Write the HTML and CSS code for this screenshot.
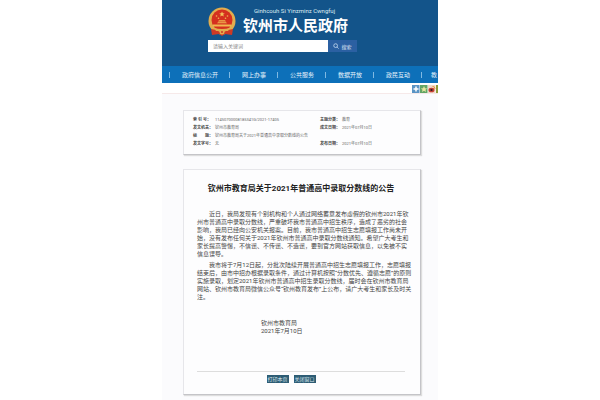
FILE: index.html
```html
<!DOCTYPE html>
<html lang="zh-CN">
<head>
  <meta charset="UTF-8" />
  <meta name="viewport" content="width=device-width, initial-scale=1" />
  <title>钦州市人民政府</title>
  <link rel="stylesheet" href="styles.css">
</head>
<body>
  <div class="page">
    <header class="header">
      <div class="brand">
        <svg class="emblem" viewBox="0 0 28 30">
          <ellipse cx="14" cy="14" rx="13.5" ry="13.5" fill="#e2ad4e" />
          <path d="M3 22 L8 23 L14 26 L20 23 L25 22 L24 28 L17 27 L14 29 L11 27 L4 28 Z" fill="#cf3a24" />
          <circle cx="14" cy="13" r="10.5" fill="#d5301f" />
          <path d="M14 4.5 l.8 1.8 2 .1 -1.6 1.2 .6 2 -1.8-1.2 -1.8 1.2 .6-2 -1.6-1.2 2-.1z" fill="#f3c45c" />
          <g fill="#f0b850">
            <circle cx="8.5" cy="9" r=".8" />
            <circle cx="10.5" cy="11.3" r=".8" />
            <circle cx="17.5" cy="11.3" r=".8" />
            <circle cx="19.5" cy="9" r=".8" />
            <path d="M10 14.5 L11 13.3 H17 L18 14.5 Z M9 16.3 L10 15.3 H18 L19 16.3 Z M5 17.5 H23 V19.5 H5 Z" />
          </g>
          <path d="M6 21 Q14 23 22 21 L20 24 H8 Z" fill="#e2ad4e" />
          <circle cx="14" cy="25" r="2.5" fill="#e2ad4e" />
          <circle cx="14" cy="25" r="1" fill="#cf3a24" />
        </svg>
        <div class="brand-text">
          <div class="brand-latin">Ginhcouh Si Yinzminz Cwngfuj</div>
          <h1>钦州市人民政府</h1>
        </div>
      </div>
      <form class="search">
        <input type="text" aria-label="搜索" placeholder="请输入关键词" />
        <button type="button">
          <svg viewBox="0 0 8 8"><circle cx="3.5" cy="3.5" r="2.5" /><path d="M5.5 5.5 L7.5 7.5" /></svg>
          搜索
        </button>
      </form>
    </header>

    <nav class="nav">
      <a href="#">政府信息公开</a>
      <a href="#">网上办事</a>
      <a href="#">公共服务</a>
      <a href="#">数据开放</a>
      <a href="#">政民互动</a>
      <a href="#" class="last">教</a>
    </nav>

    <div class="share">
      <a href="#" aria-label="分享"><svg viewBox="0 0 8 8"><rect width="7.5" height="8" fill="#5a94c4" /><path d="M4 1.5V6.5M1.5 4H6.5" stroke="#fff" stroke-width="1.5" /></svg></a>
      <a href="#" aria-label="空间"><svg viewBox="0 0 8 8"><rect width="7.5" height="8" fill="#62a565" /><path d="M4 1 L5 3.2 7.2 3.4 5.5 4.8 6 7 4 5.8 2 7 2.5 4.8 .8 3.4 3 3.2Z" fill="#e7e8a0" /></svg></a>
      <a href="#" aria-label="微博"><svg viewBox="0 0 8 8"><rect width="7.5" height="8" fill="#f3d9c8" /><ellipse cx="3.5" cy="5" rx="3" ry="2.3" fill="#c53f35" /><circle cx="3.5" cy="5" r="1.1" fill="#222" /><path d="M4.5 1.5 Q7 1 7 4" fill="none" stroke="#e8953a" /></svg></a>
      <a href="#" aria-label="更多"><svg viewBox="0 0 8 8"><rect width="8" height="8" fill="#8f9d38" /><path d="M2 2H6V6H2Z" fill="#f1e8a0" /></svg></a>
    </div>

    <main class="content">
      <section class="card info">
        <dl>
          <dt>索 引 号：</dt><dd>11450700008185341G/2021-17405</dd>
          <dt>主题分类：</dt><dd>教育</dd>
          <dt>发文机关：</dt><dd>钦州市教育局</dd>
          <dt>成文日期：</dt><dd>2021年07月10日</dd>
          <dt>标　　题：</dt><dd class="wide">钦州市教育局关于2021年普通高中录取分数线的公告</dd>
          <dt>发文字号：</dt><dd>无</dd>
          <dt>发布日期：</dt><dd>2021年07月10日</dd>
        </dl>
      </section>

      <article class="card article">
        <h2>钦州市教育局关于2021年普通高中录取分数线的公告</h2>
        <p>近日，我局发现有个别机构和个人通过网络蓄意发布虚假的钦州市2021年钦<br>州市普通高中录取分数线，严重破坏我市普通高中招生秩序，造成了恶劣的社会<br>影响，我局已经向公安机关报案。目前，我市普通高中招生志愿填报工作尚未开<br>始，没有发布任何关于2021年钦州市普通高中录取分数线通知。希望广大考生和<br>家长提高警惕，不信谣、不传谣、不造谣，要到官方网站获取信息，以免被不实<br>信息误导。</p>
        <p>我市将于7月12日起，分批次陆续开展普通高中招生志愿填报工作，志愿填报<br>结束后，由市中招办根据录取条件，通过计算机按照“分数优先、遵循志愿”的原则<br>实施录取，划定2021年钦州市普通高中招生录取分数线，届时会在钦州市教育局<br>网站、钦州市教育局微信公众号“钦州教育发布”上公布，请广大考生和家长及时关<br>注。</p>
        <div class="sign">钦州市教育局<br>2021年7月10日</div>
        <div class="actions">
          <button type="button">打印本页</button>
          <button type="button">关闭窗口</button>
        </div>
      </article>
    </main>
  </div>
</body>
</html>
```

FILE: styles.css
```css
* {
  box-sizing: border-box;
}
body {
  margin: 0;
  background-color: #fff;
  color: #444;
  font-family: Roboto, "Noto Sans CJK SC", sans-serif;
  font-size: 6px;
  line-height: 8px;
}
button, input {
  font-family: inherit;
  border: none;
  border-radius: 0;
}
a {
  color: inherit;
  text-decoration: none;
}
.page {
  width: 46%;
  min-height: 100vh;
  margin: 0 auto;
  background-color: #fbfbfd;
  overflow: hidden;
}
.header {
  height: 66px;
  padding: 7px 46px 0;
  background-color: #13548a;
  color: #fff;
}
.brand {
  display: flex;
  gap: 7px;
  height: 33px;
}
.emblem {
  width: 28px;
  height: 30px;
}
.brand-text {
  white-space: nowrap;
}
.brand-latin {
  padding-left: 11px;
  color: #dcebf2;
}
h1 {
  margin: 0;
  font-size: 15px;
  line-height: 22px;
  font-weight: bold;
}
.search {
  display: flex;
  width: 149px;
  height: 12px;
}
.search input {
  flex: 1;
  min-width: 0;
  padding: 0 5px;
  background-color: #fff;
  font-size: 5px;
}
.search input::placeholder {
  color: #888;
}
.search button {
  display: flex;
  align-items: center;
  justify-content: center;
  gap: 2px;
  width: 29px;
  padding: 0;
  background-color: #2b60a2;
  color: #e0eaf5;
  font-size: 5px;
}
.search svg {
  width: 6px;
  height: 6px;
  fill: none;
  stroke: #cfe2f5;
}
.nav {
  display: flex;
  height: 17px;
  padding-left: 7px;
  align-items: center;
  background-color: #0d70b9;
  color: #e6f3fb;
  overflow: hidden;
}
.nav a {
  flex: none;
  padding: 0 11px 0 12px;
  border-left: 1px solid #7fb9e2;
  line-height: 6px;
}
.nav .last {
  padding: 0 0 0 9px;
}
.share {
  display: flex;
  justify-content: flex-end;
  height: 11px;
  padding-top: 2px;
  margin-right: -6px;
  background-color: #fff;
  border-bottom: 1px solid #f6e9e9;
}
.share svg {
  display: block;
  width: 8px;
  height: 8px;
}
.content {
  padding: 16px 17px 5px 21px;
}
.card {
  background-color: #fdfdfe;
  border: 1px solid #e6e6ea;
  border-right-color: #c4c4c8;
  border-bottom-color: #c4c4c8;
  box-shadow: 1px 1px 1px #ddd;
}
.info {
  height: 45px;
  padding: 5px 9px;
  margin-bottom: 14px;
}
.info dl {
  display: grid;
  grid-template-columns: 22px 105px 22px 1fr;
  margin: 0;
  font-size: 4px;
  white-space: nowrap;
}
.info dt {
  font-weight: bold;
}
.info dd {
  margin: 0;
  color: #666;
}
.info .wide {
  grid-column: 2 / 5;
}
.article {
  padding: 13px 15px 11px 13px;
}
h2 {
  margin: 0 0 15px;
  color: #222;
  font-size: 8px;
  line-height: 12px;
  font-weight: bold;
  text-align: center;
  white-space: nowrap;
}
.article p {
  margin: 0 0 3px;
  text-indent: 2em;
  white-space: nowrap;
}
.sign {
  padding: 15px 0 36px 64px;
}
.actions {
  display: flex;
  justify-content: center;
  gap: 5px;
  padding: 3px 20px 0 0;
  border-top: 1px solid #ddd;
}
.actions button {
  width: 22px;
  height: 8px;
  padding: 0;
  background-color: #2d5c74;
  color: #dce8ee;
  font-size: 5px;
  line-height: 8px;
}
```
